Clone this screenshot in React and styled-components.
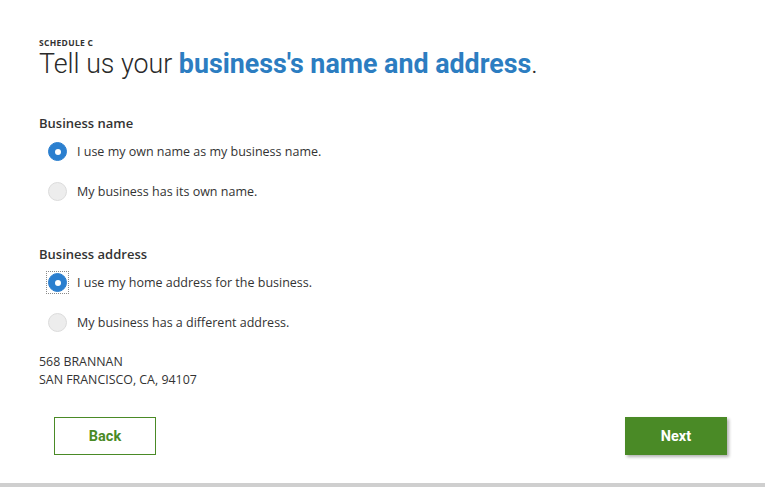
import React, { useState } from 'react';
import styled, { createGlobalStyle } from 'styled-components';

const GlobalStyle = createGlobalStyle`
  html, body {
    margin: 0;
    padding: 0;
    background: #fff;
  }
  * {
    box-sizing: border-box;
  }
`;

const Page = styled.div`
  height: 487px;
  display: flex;
  flex-direction: column;
  border-bottom: 4px solid #cfcfcf;
  font-family: 'Open Sans', sans-serif;
  color: #333;
`;

const Content = styled.div`
  flex: 1;
  padding: 37px 38px 0 39px;
`;

const Eyebrow = styled.div`
  font-size: 8.5px;
  font-weight: 700;
  letter-spacing: 0.3px;
  color: #333;
  line-height: 11px;
`;

const Title = styled.h1`
  margin: 0;
  font-family: 'Roboto', sans-serif;
  font-weight: 300;
  font-size: 26.8px;
  line-height: 32px;
  color: #2a2a2a;

  strong {
    font-weight: 700;
    color: #2c7dc1;
  }
`;

const Section = styled.section`
  margin-top: ${props => props.top}px;
`;

const Label = styled.div`
  font-size: 13px;
  font-weight: 600;
  line-height: 18px;
  color: #333;
`;

const Options = styled.div`
  display: flex;
  flex-direction: column;
  gap: 17px;
  padding-left: 7px;
  margin-top: 8px;
`;

const Option = styled.label`
  display: flex;
  align-items: center;
  gap: 8px;
  font-size: 12.5px;
  line-height: 22px;
  cursor: pointer;
`;

// square dotted focus ring round the checked radio
const Focus = styled.span`
  display: flex;
  align-items: center;
  justify-content: center;
  width: 23px;
  height: 23px;
  flex-shrink: 0;
  border: 1px dotted ${props => (props.focused ? '#8a8a8a' : 'transparent')};
`;

const Dot = styled.span`
  position: relative;
  width: 19px;
  height: 19px;
  border-radius: 50%;
  background: ${props => (props.checked ? '#2b7fcf' : '#ededed')};
  border: 1px solid ${props => (props.checked ? '#2b7fcf' : '#dcdcdc')};

  &::after {
    content: '';
    display: ${props => (props.checked ? 'block' : 'none')};
    position: absolute;
    left: 50%;
    top: 50%;
    width: 6px;
    height: 6px;
    margin: -3px 0 0 -3px;
    border-radius: 50%;
    background: #fff;
  }
`;

const Address = styled.p`
  margin: 19px 0 0;
  font-size: 12.4px;
  line-height: 18px;
  color: #333;
`;

const Actions = styled.div`
  display: flex;
  justify-content: space-between;
  margin-top: 28px;
  padding: 0 0 0 15px;
`;

const Button = styled.button`
  width: 102px;
  height: 38px;
  font-family: 'Roboto', sans-serif;
  font-weight: 700;
  font-size: 14.5px;
  cursor: pointer;
  border: 1px solid #4a8a26;
  background: ${props => (props.primary ? '#4a8a26' : '#fff')};
  color: ${props => (props.primary ? '#fff' : '#4a8a26')};
  box-shadow: ${props => (props.primary ? '2px 2px 3px rgba(0,0,0,0.3)' : 'none')};
`;

const RadioGroup = ({ options, value, onChange, focused }) => (
  <Options>
    {options.map((opt, i) => (
      <Option key={opt} onClick={() => onChange(i)}>
        <Focus focused={focused && value === i}>
          <Dot checked={value === i} />
        </Focus>
        {opt}
      </Option>
    ))}
  </Options>
);

export default function App() {
  const [nameChoice, setNameChoice] = useState(0);
  const [addrChoice, setAddrChoice] = useState(0);

  return (
    <>
      <GlobalStyle />
      <Page>
        <Content>
          <Eyebrow>SCHEDULE C</Eyebrow>
          <Title>
            Tell us your <strong>business's name and address</strong>.
          </Title>

          <Section top={34}>
            <Label>Business name</Label>
            <RadioGroup
              options={[
                'I use my own name as my business name.',
                'My business has its own name.'
              ]}
              value={nameChoice}
              onChange={setNameChoice}
            />
          </Section>

          <Section top={42}>
            <Label>Business address</Label>
            <RadioGroup
              options={[
                'I use my home address for the business.',
                'My business has a different address.'
              ]}
              value={addrChoice}
              onChange={setAddrChoice}
              focused
            />
          </Section>

          <Address>
            568 BRANNAN
            <br />
            SAN FRANCISCO, CA, 94107
          </Address>

          <Actions>
            <Button>Back</Button>
            <Button primary>Next</Button>
          </Actions>
        </Content>
      </Page>
    </>
  );
}
